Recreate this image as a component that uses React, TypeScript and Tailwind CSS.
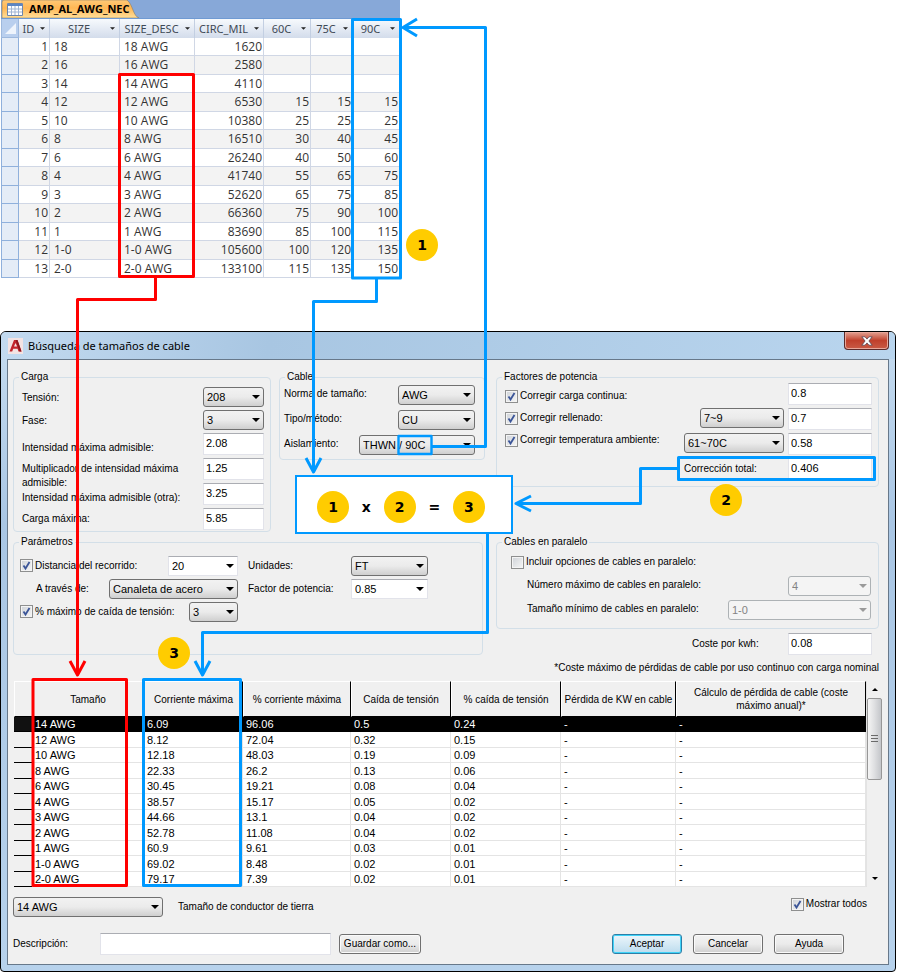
import type { ReactNode } from "react";
import clsx from "clsx";

const ampacityColumns = [
  { name: "ID", width: "w-[31px]", align: "text-right" },
  { name: "SIZE", width: "w-[70px]", align: "text-left" },
  { name: "SIZE_DESC", width: "w-[75px]", align: "text-left" },
  { name: "CIRC_MIL", width: "w-[69px]", align: "text-right" },
  { name: "60C", width: "w-[47px]", align: "text-right" },
  { name: "75C", width: "w-[42px]", align: "text-right" },
  { name: "90C", width: "w-[47px]", align: "text-right" },
];

const ampacityRows = [
  ["1", "18", "18 AWG", "1620", "", "", ""],
  ["2", "16", "16 AWG", "2580", "", "", ""],
  ["3", "14", "14 AWG", "4110", "", "", ""],
  ["4", "12", "12 AWG", "6530", "15", "15", "15"],
  ["5", "10", "10 AWG", "10380", "25", "25", "25"],
  ["6", "8", "8 AWG", "16510", "30", "40", "45"],
  ["7", "6", "6 AWG", "26240", "40", "50", "60"],
  ["8", "4", "4 AWG", "41740", "55", "65", "75"],
  ["9", "3", "3 AWG", "52620", "65", "75", "85"],
  ["10", "2", "2 AWG", "66360", "75", "90", "100"],
  ["11", "1", "1 AWG", "83690", "85", "100", "115"],
  ["12", "1-0", "1-0 AWG", "105600", "100", "120", "135"],
  ["13", "2-0", "2-0 AWG", "133100", "115", "135", "150"],
];

const resultColumns = [
  { name: "Tamaño", width: "w-[112px]" },
  { name: "Corriente máxima", width: "w-[99px]" },
  { name: "% corriente máxima", width: "w-[108px]" },
  { name: "Caída de tensión", width: "w-[100px]" },
  { name: "% caída de tensión", width: "w-[110px]" },
  { name: "Pérdida de KW en cable", width: "w-[115px]" },
  { name: "Cálculo de pérdida de cable (coste máximo anual)*", width: "" },
];

const resultRows = [
  ["14 AWG", "6.09", "96.06", "0.5", "0.24", "-", "-"],
  ["12 AWG", "8.12", "72.04", "0.32", "0.15", "-", "-"],
  ["10 AWG", "12.18", "48.03", "0.19", "0.09", "-", "-"],
  ["8 AWG", "22.33", "26.2", "0.13", "0.06", "-", "-"],
  ["6 AWG", "30.45", "19.21", "0.08", "0.04", "-", "-"],
  ["4 AWG", "38.57", "15.17", "0.05", "0.02", "-", "-"],
  ["3 AWG", "44.66", "13.1", "0.04", "0.02", "-", "-"],
  ["2 AWG", "52.78", "11.08", "0.04", "0.02", "-", "-"],
  ["1 AWG", "60.9", "9.61", "0.03", "0.01", "-", "-"],
  ["1-0 AWG", "69.02", "8.48", "0.02", "0.01", "-", "-"],
  ["2-0 AWG", "79.17", "7.39", "0.02", "0.01", "-", "-"],
];

function Caret({ className }: { className?: string }) {
  return (
    <svg viewBox="0 0 8 4" className={clsx("w-2 h-1 fill-current", className)} aria-hidden="true">
      <path d="M0 0h8L4 4z" />
    </svg>
  );
}

interface SelectProps {
  id: string;
  value: string;
  className: string;
  editable?: boolean;
  disabled?: boolean;
  label?: string;
}

function Select({ id, value, className, editable, disabled, label }: SelectProps) {
  return (
    <span className={clsx("relative block h-5 shrink-0", className)}>
      <select
        id={id}
        defaultValue={value}
        disabled={disabled}
        aria-label={label}
        className={clsx(
          "block w-full h-full appearance-none pl-[3px] pr-4 border text-[11px]",
          editable && "bg-white border-[#e2e3ea] border-t-[#abadb3]",
          disabled && "rounded-[3px] bg-[#f4f4f4] border-[#adb2b5] text-[#838383] opacity-100",
          !editable && !disabled &&
            "rounded-[3px] border-[#707070] bg-linear-to-b from-[#f2f2f2] from-0% via-[#ebebeb] via-50% to-[#cfcfcf] to-100%"
        )}
      >
        <option>{value}</option>
      </select>
      <Caret className={clsx("absolute right-1 top-2 pointer-events-none", disabled && "text-[#9a9a9a]")} />
    </span>
  );
}

interface TextFieldProps {
  id: string;
  value: string;
  className: string;
  label?: string;
}

function TextField({ id, value, className, label }: TextFieldProps) {
  return (
    <input
      id={id}
      type="text"
      defaultValue={value}
      aria-label={label}
      className={clsx(
        "block shrink-0 h-[22px] px-0.5 pb-0.5 bg-white border border-[#e2e3ea] border-t-[#abadb3] text-[11px]",
        className
      )}
    />
  );
}

function Checkbox({ label, checked }: { label: string; checked?: boolean }) {
  return (
    <label className="flex items-center gap-0.5 whitespace-nowrap">
      <span className="relative block w-[13px] h-[13px] shrink-0">
        <input
          type="checkbox"
          defaultChecked={checked}
          className="peer block w-full h-full appearance-none border border-[#8e8f8f] bg-linear-to-br from-[#cfd3d8] to-[#f6f6f6] shadow-[inset_0_0_0_1px_#f4f4f4]"
        />
        <svg
          viewBox="0 0 13 13"
          className="absolute inset-0 hidden peer-checked:block pointer-events-none"
          aria-hidden="true"
        >
          <path d="M3.5 6.5 5.5 9.5 9.5 3" fill="none" stroke="#3b5598" strokeWidth="1.8" />
        </svg>
      </span>
      {label}
    </label>
  );
}

function Group({ title, className, children }: { title: string; className: string; children: ReactNode }) {
  return (
    <fieldset className={clsx("min-w-0 border border-[#d3dfe8] rounded-[4px]", className)}>
      <legend className="ml-[5px] px-0.5 leading-3">{title}</legend>
      {children}
    </fieldset>
  );
}

function DialogButton({ children, className, primary }: { children: ReactNode; className: string; primary?: boolean }) {
  return (
    <button
      type="button"
      className={clsx(
        "h-5 rounded-[3px] border whitespace-nowrap",
        primary
          ? "border-[#2c7fa8] shadow-[inset_0_0_0_1px_#3fd3f8] bg-linear-to-b from-[#edf6fb] to-[#bcdcee]"
          : "border-[#707070] shadow-[inset_0_0_0_1px_#fafafa] bg-linear-to-b from-[#f2f2f2] via-[#ebebeb] to-[#cfcfcf]",
        className
      )}
    >
      {children}
    </button>
  );
}

function AmpacityTable() {
  return (
    <section className="ml-px w-[399px] text-[#333333]">
      <div className="flex h-[19px] bg-[#87a8d8] border-b border-[#6f9ad3]">
        <div className="relative w-[139px] flex items-center">
          <svg viewBox="0 0 139 19" className="absolute inset-0 w-full h-full" preserveAspectRatio="none" aria-hidden="true">
            <defs>
              <linearGradient id="tab" x1="0" y1="0" x2="0" y2="1">
                <stop offset="0" stopColor="#ffc977" />
                <stop offset="0.45" stopColor="#ffb755" />
                <stop offset="1" stopColor="#ffdf9a" />
              </linearGradient>
            </defs>
            <path d="M1 19V3Q1 0 3 0H126C132 5 132 17 138 19Z" fill="url(#tab)" stroke="#8b7a5e" strokeWidth="0.6" />
          </svg>
          <svg viewBox="0 0 16 13" className="relative ml-1.5 w-4 h-[13px]" aria-hidden="true">
            <path d="M0.5 0.5h15v12h-15z" fill="#fff" stroke="#6c86ad" />
            <path d="M1 1h14v2H1z" fill="#5d86c4" />
            <path d="M1 6h14M1 9h14M4.5 3v9M8 3v9M11.500 3v9" stroke="#9fb4d3" fill="none" />
          </svg>
          <h2 className="relative ml-1.5 text-[11px] leading-4 font-bold text-black font-['Open_Sans',sans-serif]">
            AMP_AL_AWG_NEC
          </h2>
        </div>
      </div>
      <table className="w-full table-fixed border-separate border-spacing-0 text-[12px] leading-4 font-['Open_Sans',sans-serif]">
        <thead className="font-['Noto_Sans',sans-serif] text-[11px] text-[#3f4a56]">
          <tr className="h-[19px] bg-linear-to-b from-[#f7fafd] to-[#d3dceb]">
            <th className="w-[18px] p-0 border-r border-b border-l border-[#9db8dd] bg-[#b9cfee]">
              <svg viewBox="0 0 16 16" className="block w-4 h-4" aria-hidden="true">
                <path d="M14 3v11H3z" fill="#eef4fc" />
              </svg>
            </th>
            {ampacityColumns.map((col) => (
              <th key={col.name} className={clsx("p-0 border-r border-[#c3cfe2] font-normal", col.width)}>
                <div className="flex items-center">
                  <span className="flex-1 overflow-hidden pl-0.5 text-center whitespace-nowrap">{col.name}</span>
                  <Caret className="mx-1 w-[5px] h-[3px] shrink-0 text-[#222222]" />
                </div>
              </th>
            ))}
          </tr>
        </thead>
        <tbody>
          {ampacityRows.map((row) => (
            <tr key={row[0]} className="odd:h-[18px] even:h-[19px] odd:bg-white even:bg-[#f3f3f3]">
              <td className="p-0 border-r border-b border-l border-[#8fb0dc] bg-[#e4ecf7]" />
              {row.map((cell, i) => (
                <td
                  key={i}
                  className={clsx("py-0 pr-px pl-1 border-r border-b border-[#d0d7e5]", ampacityColumns[i].align)}
                >
                  {cell}
                </td>
              ))}
            </tr>
          ))}
        </tbody>
      </table>
    </section>
  );
}

function LoadGroup() {
  const fields = [
    { id: "intensidad", label: "Intensidad máxima admisible:", value: "2.08", pad: "pt-2" },
    { id: "multiplicador", label: "Multiplicador de intensidad máxima admisible:", value: "1.25", pad: "pt-1" },
    { id: "intensidad-otra", label: "Intensidad máxima admisible (otra):", value: "3.25", pad: "pt-2" },
    { id: "carga-maxima", label: "Carga máxima:", value: "5.85", pad: "pt-1" },
  ];

  return (
    <Group title="Carga" className="w-[258px] h-[161px]">
      <div className="pt-1 pl-2 pr-1.5">
        <div className="flex justify-between h-[23px]">
          <label htmlFor="tension" className="pt-1">Tensión:</label>
          <Select id="tension" value="208" className="w-[61px]" />
        </div>
        <div className="flex justify-between h-[23px]">
          <label htmlFor="fase" className="pt-1">Fase:</label>
          <Select id="fase" value="3" className="w-[61px]" />
        </div>
        {fields.map((field) => (
          <div key={field.id} className="flex justify-between h-[25px]">
            <label htmlFor={field.id} className={clsx("w-[176px]", field.pad)}>{field.label}</label>
            <TextField id={field.id} value={field.value} className="w-[61px]" />
          </div>
        ))}
      </div>
    </Group>
  );
}

function CableGroup() {
  return (
    <Group title="Cable" className="flex-1 h-[89px]">
      <div className="pt-0.5 pl-1 pr-[9px]">
        <div className="flex items-start justify-between h-[25px]">
          <label htmlFor="norma" className="pt-0.5">Norma de tamaño:</label>
          <Select id="norma" value="AWG" className="w-[77px]" />
        </div>
        <div className="flex items-start justify-between h-[25px]">
          <label htmlFor="tipo" className="pt-0.5">Tipo/método:</label>
          <Select id="tipo" value="CU" className="w-[77px]" />
        </div>
        <div className="flex items-start justify-between h-[25px]">
          <label htmlFor="aislamiento" className="pt-0.5">Aislamiento:</label>
          <Select id="aislamiento" value="THWN / 90C" className="w-[116px]" />
        </div>
      </div>
    </Group>
  );
}

function FactorsGroup() {
  return (
    <Group title="Factores de potencia" className="h-[116px]">
      <div className="flex justify-between pl-2 pr-1.5">
        <div className="pt-1.5">
          <div className="h-[22px]"><Checkbox label="Corregir carga continua:" checked /></div>
          <div className="h-[22px]"><Checkbox label="Corregir rellenado:" checked /></div>
          <div className="h-[22px]"><Checkbox label="Corregir temperatura ambiente:" checked /></div>
        </div>
        <div className="flex flex-col">
          <div className="flex justify-end h-[25px]">
            <TextField id="f-continua" label="Factor de carga continua" value="0.8" className="w-[84px]" />
          </div>
          <div className="flex justify-end gap-1 h-[25px]">
            <Select id="rellenado" label="Conductores" value="7~9" className="w-[84px]" />
            <TextField id="f-rellenado" label="Factor de rellenado" value="0.7" className="w-[84px]" />
          </div>
          <div className="flex justify-end gap-1 h-[25px]">
            <Select id="temperatura" label="Temperatura" value="61~70C" className="w-[100px]" />
            <TextField id="f-temperatura" label="Factor de temperatura" value="0.58" className="w-[84px]" />
          </div>
          <div className="flex justify-end h-[25px]">
            <label htmlFor="total" className="w-[104px] pt-1">Corrección total:</label>
            <TextField id="total" value="0.406" className="w-[84px]" />
          </div>
        </div>
      </div>
    </Group>
  );
}

function ParametersGroup() {
  return (
    <Group title="Parámetros" className="w-[470px] h-[119px]">
      <div className="flex pt-1.5 pl-1.5">
        <div className="w-[218px]">
          <div className="flex items-center justify-between h-[23px]">
            <Checkbox label="Distancia del recorrido:" checked />
            <Select id="distancia" label="Distancia del recorrido" value="20" editable className="w-[70px]" />
          </div>
          <div className="flex items-center justify-between h-[23px]">
            <label htmlFor="a-traves" className="pl-4">A través de:</label>
            <Select id="a-traves" value="Canaleta de acero" className="w-[129px]" />
          </div>
          <div className="flex items-center justify-between h-[23px]">
            <Checkbox label="% máximo de caída de tensión:" checked />
            <Select id="caida" label="Caída de tensión" value="3" className="w-[49px]" />
          </div>
        </div>
        <div className="ml-2.5">
          <div className="flex items-center h-[23px]">
            <label htmlFor="unidades" className="w-[103px]">Unidades:</label>
            <Select id="unidades" value="FT" className="w-[77px]" />
          </div>
          <div className="flex items-center h-[23px]">
            <label htmlFor="factor" className="w-[103px]">Factor de potencia:</label>
            <Select id="factor" value="0.85" editable className="w-[77px]" />
          </div>
        </div>
      </div>
    </Group>
  );
}

function ParallelGroup() {
  return (
    <Group title="Cables en paralelo" className="mt-[49px] h-[93px]">
      <div className="pl-3.5 pr-[7px]">
        <div className="flex items-center h-7">
          <Checkbox label="Incluir opciones de cables en paralelo:" />
        </div>
        <div className="flex items-start justify-between pl-4 h-6">
          <label htmlFor="numero" className="pt-0.5">Número máximo de cables en paralelo:</label>
          <Select id="numero" value="4" disabled className="w-[83px]" />
        </div>
        <div className="flex items-start justify-between pl-4 h-6">
          <label htmlFor="minimo" className="pt-0.5">Tamaño mínimo de cables en paralelo:</label>
          <Select id="minimo" value="1-0" disabled className="w-[143px]" />
        </div>
      </div>
    </Group>
  );
}

function ResultsTable() {
  return (
    <div className="flex mt-1.5 px-px">
      <table className="flex-1 table-fixed border-separate border-spacing-0 bg-white">
        <thead>
          <tr className="h-9 bg-[#f0f0f0]">
            <th className="w-[18px] p-0 border-t border-l border-white border-b border-b-black" />
            {resultColumns.map((col) => (
              <th
                key={col.name}
                className={clsx(
                  "p-0 leading-[13px] font-normal border-t border-l border-t-white border-l-white border-r border-b border-r-black border-b-black",
                  col.width
                )}
              >
                {col.name}
              </th>
            ))}
          </tr>
        </thead>
        <tbody className="text-[11px]">
          {resultRows.map((row, n) => (
            <tr
              key={row[0]}
              className={clsx("leading-[14px] odd:h-[15px] even:h-4", n === 0 && "bg-black text-white")}
            >
              <td className={clsx("p-0 border-b border-black", n === 0 ? "bg-[#111111]" : "bg-[#f0f0f0]")} />
              {row.map((cell, i) => (
                <td
                  key={i}
                  className={clsx(
                    "py-0 pr-0 pl-[3px] border-r border-b",
                    n === 0 ? "border-black" : "border-[#e4e4e4]"
                  )}
                >
                  {cell}
                </td>
              ))}
            </tr>
          ))}
        </tbody>
      </table>
      <div className="flex flex-col w-4 bg-[#f0f0f0] border-l border-[#e3e3e3]">
        <button type="button" aria-label="Subir" className="flex items-center justify-center h-[17px]">
          <Caret className="w-[6px] h-[3px] rotate-180" />
        </button>
        <div className="flex items-center justify-center h-[82px] rounded-[2px] border border-[#979797] bg-linear-to-r from-[#f5f5f5] via-[#dedfe1] to-[#c4c6ca]">
          <svg viewBox="0 0 7 8" className="w-[7px] h-2" aria-hidden="true">
            <path d="M0 .5h7M0 3.500h7M0 6.500h7" stroke="#6a6a6a" />
          </svg>
        </div>
        <button type="button" aria-label="Bajar" className="flex items-center justify-center h-[17px] mt-auto">
          <Caret className="w-[6px] h-[3px]" />
        </button>
      </div>
    </div>
  );
}

function CableSizeDialog() {
  return (
    <section className="mt-[53px] mr-[3px] border border-black rounded-t-[6px] rounded-b-[4px] px-1.5 pb-1.5 bg-linear-to-b from-[#c6dcf0] from-0% via-[#a9c6e4] via-30% to-[#b7d2ec] to-100% text-black">
      <header className="flex items-start justify-between h-[27px] -mx-1.5 rounded-t-[5px] bg-linear-100 from-[#c3daf0] from-0% via-[#a8c6e2] via-30% to-[#b9d5ee] to-100%">
        <div className="flex items-center gap-[5px] pl-[7px] pt-1">
          <svg viewBox="0 0 15 16" className="w-[15px] h-4" aria-hidden="true">
            <path d="M0 0h15v16H0z" fill="#f3e3e3" />
            <path d="M6 2h3.500l4 11.500h-3l-.9-2.800H5.200l-1 2.800H1.500z" fill="#c2242c" />
            <path d="M7.500 5 6 8.600h3.100z" fill="#f3e3e3" />
            <path d="M9.500 2l4 11.500h-2L7.700 2z" fill="#8f161d" />
          </svg>
          <h1 className="text-[11px] leading-5 font-['Noto_Sans',sans-serif]">Búsqueda de tamaños de cable</h1>
        </div>
        <button
          type="button"
          aria-label="Cerrar"
          className="flex items-center justify-center w-[45px] h-[18px] mr-1.5 rounded-b-[4px] border border-t-0 border-[#5b2a2a] shadow-[inset_0_0_0_1px_#e8a79a] bg-linear-to-b from-[#e2a193] from-0% via-[#c0402c] via-50% to-[#c95a45] to-100%"
        >
          <svg viewBox="0 0 12 10" className="w-3 h-2.5" aria-hidden="true">
            <path
              d="M.8.800h3.200l2 2.300 2-2.300h3.200L7.900 5l3.300 4.200H8L6 6.900 4 9.200H.8L4.100 5z"
              fill="#fff"
              stroke="#5a4550"
              strokeWidth=".8"
            />
          </svg>
        </button>
      </header>

      <form className="border border-[#67788a] bg-[#f0f0f0] pt-[11px] pb-[9px] px-[5px] text-[10px] leading-[14px] font-['Liberation_Sans',sans-serif]">
        <div className="flex gap-[11px] pr-1">
          <div className="w-[472px] shrink-0">
            <div className="flex items-start gap-2">
              <LoadGroup />
              <CableGroup />
            </div>
            <div className="mt-1">
              <ParametersGroup />
            </div>
          </div>
          <div className="flex-1">
            <FactorsGroup />
            <ParallelGroup />
            <div className="flex items-center justify-end mt-1 pr-[7px]">
              <label htmlFor="coste" className="w-24">Coste por kwh:</label>
              <TextField id="coste" value="0.08" className="w-[84px]" />
            </div>
          </div>
        </div>
        <p className="mt-1.5 pr-1 text-right">*Coste máximo de pérdidas de cable por uso continuo con carga nominal</p>

        <ResultsTable />

        <div className="flex items-start justify-between mt-2.5">
          <div className="flex items-center gap-[15px]">
            <Select id="tierra" value="14 AWG" className="w-[150px]" />
            <label htmlFor="tierra">Tamaño de conductor de tierra</label>
          </div>
          <div className="pr-4">
            <Checkbox label="Mostrar todos" checked />
          </div>
        </div>

        <div className="flex items-center mt-4">
          <label htmlFor="descripcion" className="w-[87px]">Descripción:</label>
          <TextField id="descripcion" value="" className="w-[231px]" />
          <DialogButton className="ml-2 w-[82px]">Guardar como...</DialogButton>
          <div className="flex gap-[11px] ml-auto mr-[39px]">
            <DialogButton primary className="w-[70px]">Aceptar</DialogButton>
            <DialogButton className="w-[70px]">Cancelar</DialogButton>
            <DialogButton className="w-[70px]">Ayuda</DialogButton>
          </div>
        </div>
      </form>
    </section>
  );
}

function Step({ n, className }: { n: number; className?: string }) {
  return (
    <span className={clsx("flex items-center justify-center w-8 h-8 rounded-full bg-[#ffcc00]", className)}>{n}</span>
  );
}

// Callouts drawn over both windows
function Callouts() {
  return (
    <div className="absolute inset-0 pointer-events-none text-[14px] leading-4 font-bold text-black font-['DejaVu_Sans',sans-serif]">
      <svg viewBox="0 0 899 972" className="absolute left-0 top-0 w-[899px] h-[972px]" fill="none" strokeWidth="3" aria-hidden="true">
        <g stroke="#ff0000" strokeLinejoin="round">
          <rect x="119.500" y="74.500" width="74" height="202" />
          <path d="M155.500 277V299.500H77.500V675" />
          <path d="M70 661 77.500 675 85 661" />
          <rect x="33" y="679.500" width="93.500" height="206" />
        </g>
        <g stroke="#0099ff" strokeLinejoin="round">
          <rect x="352.500" y="19.500" width="48" height="258.500" />
          <path d="M376.500 278V301.500H313.500V472" />
          <path d="M306 458 313.500 472 321 458" />
          <rect x="398.500" y="436" width="33" height="18" strokeWidth="2.400" />
          <path d="M432 446.500H485.500V27.500H403" />
          <path d="M417 19 403 27.500 417 36" />
          <rect x="678.500" y="457.500" width="196" height="22" />
          <path d="M678 468.500H640.500V503.500H516" />
          <path d="M531 496 516 503.500 531 511" />
          <path d="M487.500 533V632.500H202.500V675" />
          <path d="M195 661 202.500 675 210 661" />
          <rect x="143.500" y="679.500" width="97" height="206" />
        </g>
      </svg>
      <Step n={1} className="absolute left-[406px] top-[229px]" />
      <Step n={2} className="absolute left-[710px] top-[484px]" />
      <Step n={3} className="absolute left-[158px] top-[637px]" />
      <div className="absolute left-[295px] top-[475px] flex items-center justify-between w-[218px] h-[59px] pl-5 pr-[26px] pt-1 border-2 border-[#0099ff] bg-white">
        <Step n={1} />
        <span>x</span>
        <Step n={2} />
        <span>=</span>
        <Step n={3} />
      </div>
    </div>
  );
}

export default function App() {
  return (
    <main className="relative overflow-hidden bg-white">
      <AmpacityTable />
      <CableSizeDialog />
      <Callouts />
    </main>
  );
}
